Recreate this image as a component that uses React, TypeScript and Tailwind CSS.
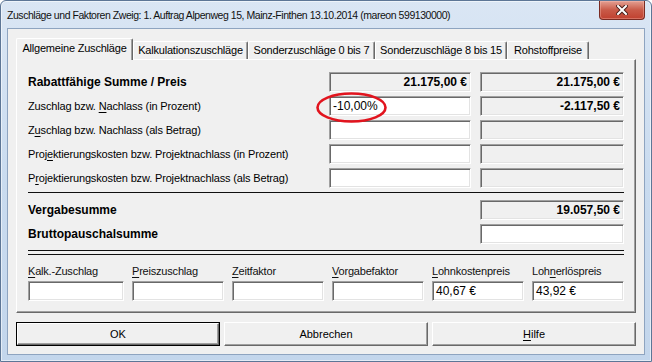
import React from 'react';

const sunken =
  'border border-t-[#a0a0a0] border-l-[#a0a0a0] border-r-white border-b-white shadow-[inset_1px_1px_0_#696969,inset_-1px_-1px_0_#e3e3e3]';

const U = ({ c }: { c: string }) => <span className="underline underline-offset-[2px]">{c}</span>;

interface FieldProps {
  value?: string;
  readOnly?: boolean;
  bold?: boolean;
  right?: boolean;
}

const Field: React.FC<FieldProps> = ({ value = '', readOnly = false, bold = false, right = false }) => (
  <div
    className={`h-[20px] ${sunken} ${readOnly ? 'bg-[#f0f0f0]' : 'bg-white'} flex items-center px-[3px] text-[12px] leading-none ${
      bold ? 'font-bold' : ''
    } ${right ? 'justify-end' : 'justify-start'}`}
  >
    {value}
  </div>
);

interface RowProps {
  label: React.ReactNode;
  bold?: boolean;
  left?: React.ReactNode;
  right?: React.ReactNode;
}

const Row: React.FC<RowProps> = ({ label, bold, left, right }) => (
  <div className="flex items-center h-[20px]">
    <div className={`flex-1 ${bold ? 'font-bold text-[12px]' : 'text-[11px] tracking-[-0.15px]'}`}>{label}</div>
    <div className="w-[142px]">{left}</div>
    <div className="w-[144px] ml-[9px]">{right}</div>
  </div>
);

const tabs = [
  { label: 'Allgemeine Zuschläge', w: 'w-[117px]', active: true },
  { label: 'Kalkulationszuschläge', w: 'w-[115px]', active: false },
  { label: 'Sonderzuschläge 0 bis 7', w: 'w-[127px]', active: false },
  { label: 'Sonderzuschläge 8 bis 15', w: 'w-[132px]', active: false },
  { label: 'Rohstoffpreise', w: 'w-[82px]', active: false },
];

const bottomFields = [
  { label: <><U c="K" />alk.-Zuschlag</>, value: '', w: 'w-[96px]' },
  { label: <><U c="P" />reiszuschlag</>, value: '', w: 'w-[92px]' },
  { label: <><U c="Z" />eitfaktor</>, value: '', w: 'w-[92px]' },
  { label: <><U c="V" />orgabefaktor</>, value: '', w: 'w-[92px]' },
  { label: <><U c="L" />ohnkostenpreis</>, value: '40,67 €', w: 'w-[92px]' },
  { label: <>Loh<U c="n" />erlöspreis</>, value: '43,92 €', w: 'w-[92px]' },
];

const raised =
  'border border-t-white border-l-white border-r-[#696969] border-b-[#696969] shadow-[inset_-1px_-1px_0_#a0a0a0]';

export default function App() {
  return (
    <div className="relative w-[652px] h-[362px] flex flex-col bg-gradient-to-b from-[#dae6f4] via-[#c9dbef] to-[#c3d6ec] border border-[#5d7696] rounded-t-[6px] font-['Liberation_Sans',Arial,sans-serif] text-black shadow-[inset_0_0_0_1px_rgba(255,255,255,0.55)]">
      {/* title bar */}
      <div className="h-[27px] flex items-start justify-between">
        <div className="pl-[6px] pt-[7px] text-[10.5px] leading-[14px] tracking-[-0.45px] text-[#111]">
          Zuschläge und Faktoren Zweig: 1. Auftrag Alpenweg 15, Mainz-Finthen 13.10.2014 (mareon 599130000)
        </div>
        <div className="mr-[6px] w-[46px] h-[19px] rounded-b-[4px] border border-t-0 border-[#7a2b22] bg-gradient-to-b from-[#e3a093] via-[#c95a48] to-[#c0402f] flex items-center justify-center shadow-[inset_0_0_0_1px_rgba(255,200,190,0.35)]">
          <svg width="12" height="10" viewBox="0 0 12 10">
            <path d="M2 1 L10 9 M10 1 L2 9" stroke="#4a1f1a" strokeWidth="4" strokeLinecap="square" />
            <path d="M2 1 L10 9 M10 1 L2 9" stroke="#ffffff" strokeWidth="2" strokeLinecap="square" />
          </svg>
        </div>
      </div>

      {/* client area */}
      <div className="flex-1 mx-[6px] mb-[6px] border border-[#8ea4c0] bg-[#f0f0f0] px-[8px] pt-[9px] flex flex-col">
        {/* tabs */}
        <div className="flex items-end h-[21px]">
          {tabs.map((t) =>
            t.active ? (
              <div
                key={t.label}
                className={`${t.w} h-[22px] -mb-[1px] relative z-10 bg-[#f0f0f0] border-t border-l border-r border-t-white border-l-white border-r-[#696969] rounded-t-[2px] shadow-[inset_-1px_0_0_#a0a0a0] flex items-center justify-center text-[11px] tracking-[-0.2px] pb-[2px]`}
              >
                {t.label}
              </div>
            ) : (
              <div
                key={t.label}
                className={`${t.w} h-[18px] bg-[#f0f0f0] border-t border-l border-r border-t-white border-l-white border-r-[#696969] rounded-t-[2px] shadow-[inset_-1px_0_0_#a0a0a0] flex items-center justify-center text-[11px] tracking-[-0.2px]`}
              >
                {t.label}
              </div>
            )
          )}
        </div>

        {/* tab page */}
        <div className={`h-[254px] ${raised} px-[11px] pt-[12px] flex flex-col`}>
          <div className="flex flex-col gap-[4px]">
            <Row
              bold
              label="Rabattfähige Summe / Preis"
              left={<Field readOnly bold right value="21.175,00 €" />}
              right={<Field readOnly bold right value="21.175,00 €" />}
            />
            <Row
              label={<>Zuschlag bzw. <U c="N" />achlass (in Prozent)</>}
              left={<Field value="-10,00%" />}
              right={<Field readOnly bold right value="-2.117,50 €" />}
            />
            <Row
              label={<>Z<U c="u" />schlag bzw. Nachlass (als Betrag)</>}
              left={<Field />}
              right={<Field readOnly />}
            />
            <Row
              label={<>Proj<U c="e" />ktierungskosten bzw. Projektnachlass (in Prozent)</>}
              left={<Field />}
              right={<Field readOnly />}
            />
            <Row
              label={<>P<U c="r" />ojektierungskosten bzw. Projektnachlass (als Betrag)</>}
              left={<Field />}
              right={<Field readOnly />}
            />
          </div>

          <div className="mt-[4px] h-px bg-[#101010]" />

          <div className="mt-[7px] flex flex-col gap-[4px]">
            <Row bold label="Vergabesumme" right={<Field readOnly bold right value="19.057,50 €" />} />
            <Row bold label="Bruttopauschalsumme" right={<Field />} />
          </div>

          <div className="mt-[6px] h-px bg-[#101010]" />
          <div className="mt-[3px] h-px bg-[#101010]" />

          <div className="mt-[9px] flex gap-[8px]">
            {bottomFields.map((f, i) => (
              <div key={i} className={`${f.w} flex flex-col`}>
                <div className="text-[11px] leading-[14px] h-[14px] tracking-[-0.2px] text-[#111]">{f.label}</div>
                <div className="mt-[3px]">
                  <Field value={f.value} />
                </div>
              </div>
            ))}
          </div>
        </div>

        {/* buttons */}
        <div className="mt-[9px] flex gap-[4px]">
          <div className="w-[204px] h-[24px] border border-black">
            <div className={`h-full ${raised} bg-[#f0f0f0] flex items-center justify-center text-[11px]`}>OK</div>
          </div>
          <div className={`w-[204px] h-[24px] ${raised} bg-[#f0f0f0] flex items-center justify-center text-[11px]`}>
            Abbrechen
          </div>
          <div className={`w-[204px] h-[24px] ${raised} bg-[#f0f0f0] flex items-center justify-center text-[11px]`}>
            <span><U c="H" />ilfe</span>
          </div>
        </div>
      </div>

      {/* red annotation ellipse */}
      <svg className="absolute left-[315px] top-[91px]" width="71" height="31" viewBox="0 0 71 31">
        <ellipse cx="35.5" cy="15.5" rx="34" ry="14" fill="none" stroke="#e2141e" strokeWidth="2.6" />
      </svg>
    </div>
  );
}
